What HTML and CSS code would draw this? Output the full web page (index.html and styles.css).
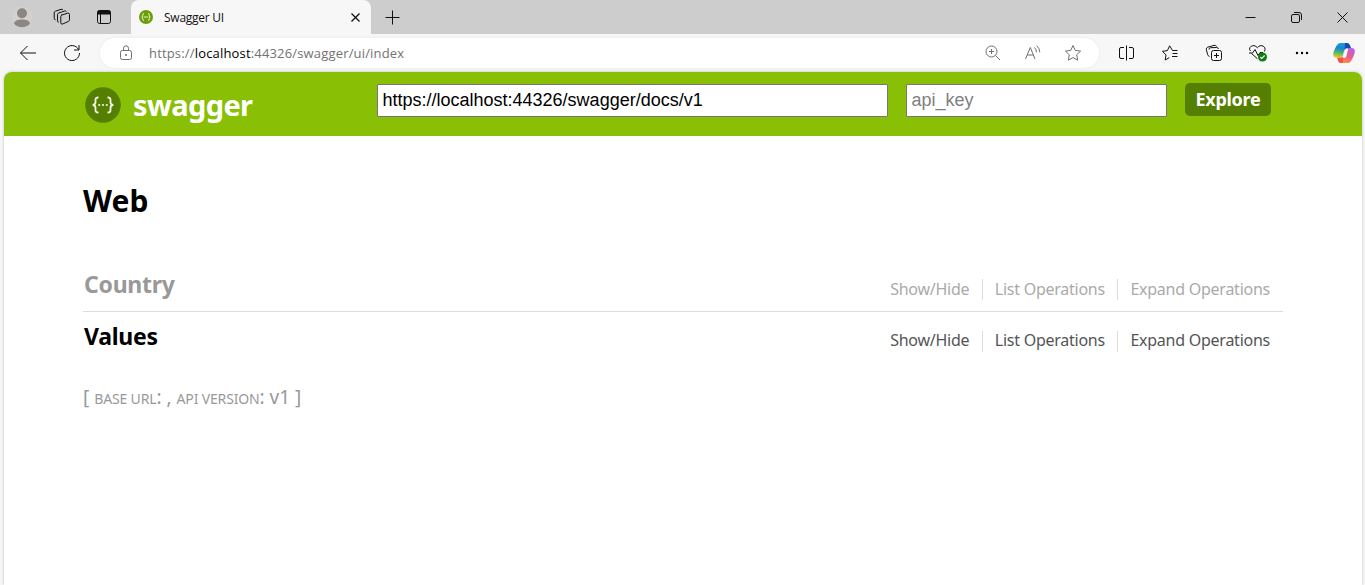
FILE: index.html
```html
<!DOCTYPE html>
<html lang="en">
<head>
<meta charset="utf-8">
<title>Swagger UI</title>
<link rel="stylesheet" href="styles.css">
</head>
<body>
<div class="tabstrip">
  <div class="cell"><svg width="22" height="22" viewBox="0 0 22 22"><circle cx="11" cy="11" r="10.5" fill="#d3d0cd"/><circle cx="11" cy="7.3" r="5" fill="#8b8682"/><path d="M3 17.5C4 14.5 7 13.6 11 13.6s7 .9 8 3.9c-2 2.600-5 3.800-8 3.800s-6-1.200-8-3.800Z" fill="#8b8682"/></svg></div>
  <div class="cell"><svg class="line" width="18" height="18" viewBox="0 0 18 18"><path d="M8 7.300 14.500 5.200q2-.5 2 1.300v5.200q0 1.300-1.300 1.800L9.700 16q-1.900.6-1.900-1.200V8.600q0-1 .8-1.400"/><path d="M5.800 14.200q-1.300 0-1.300-1.400V6.700q0-1.300 1.200-1.700L11.700 3q1.200-.4 1.800.6M2.600 11.800Q1.200 11.700 1.200 10.300V4.900q0-1.300 1.200-1.700L8 1.300q1.300-.4 1.900.6"/></svg></div>
  <div class="cell cell-narrow"><svg class="line" width="16" height="16" viewBox="0 0 16 16"><rect x="1.500" y="1.500" width="13" height="13" rx="2.200"/><path d="M2 2h12v3H2Z" fill="#111"/><path d="M4.500 5v9.500"/></svg></div>
  <div class="tab">
    <svg width="14" height="14" viewBox="0 0 14 14"><circle cx="7" cy="7" r="7" fill="#6b9e08"/><path d="M5 3.500q-1.300 0-1.300 1.300v1.100q0 1-1 1.100 1 .1 1 1.100v1.100q0 1.300 1.300 1.300M9 3.500q1.300 0 1.300 1.300v1.100q0 1 1 1.100-1 .1-1 1.100v1.100q0 1.300-1.300 1.300M4.800 7h4.400" fill="none" stroke="#e8f3cd"/></svg>
    <span class="tab-title">Swagger UI</span>
    <svg class="line strong" width="9" height="9" viewBox="0 0 9 9"><path d="m.5.5 8 8m0-8-8 8"/></svg>
  </div>
  <div class="new-tab"><svg class="line" width="15" height="15" viewBox="0 0 15 15"><path d="M7.500.5v14M.5 7.500h14"/></svg></div>
  <div class="window-controls">
    <div><svg class="line" width="11" height="11"><path d="M.5 5.500h10"/></svg></div>
    <div><svg class="line" width="11" height="11" viewBox="0 0 11 11"><rect x=".5" y="2.500" width="8" height="8" rx="1.500"/><path d="M3 .5h5q2.500 0 2.500 2.500v5"/></svg></div>
    <div><svg class="line" width="11" height="11"><path d="m.5.5 10 10m0-10-10 10"/></svg></div>
  </div>
</div>
<div class="toolbar">
  <div class="tool"><svg class="line" width="18" height="16" viewBox="0 0 18 16"><path d="M8.500 1 1.500 8l7 7M1.500 8H17"/></svg></div>
  <div class="tool"><svg class="line" width="18" height="18" viewBox="0 0 18 18"><path d="M15.600 5.500A7.500 7.500 0 1 0 16.500 9M16 1v5h-5"/></svg></div>
  <div class="address">
    <svg class="line grey" width="14" height="18" viewBox="0 0 14 18"><rect x="1.500" y="6.500" width="11" height="9" rx="1.800"/><path d="M4.500 6.500V4.300a2.500 2.500 0 0 1 5 0v2.200"/><circle cx="7" cy="11" r=".6" fill="#666"/></svg>
    <span class="url">https://<b>localhost</b>:44326/swagger/ui/index</span>
    <div class="address-icons">
      <div><svg class="line grey" width="16" height="16" viewBox="0 0 16 16"><circle cx="6.500" cy="6.500" r="5.500"/><path d="m10.500 10.500 4.500 4.500M6.500 4v5M4 6.500h5"/></svg></div>
      <div><svg class="line grey" width="18" height="16" viewBox="0 0 18 16"><path d="M1.500 14 6.300 2.500 11 14M3.200 10h6.200M10.500 2.500q2 2 2 4.800M12.800.8q3 2.600 3 6.500"/></svg></div>
      <div><svg class="line grey" width="18" height="18" viewBox="0 0 18 18"><path d="m9 1.500 2.300 4.900 5.300.7-3.900 3.700 1 5.400L9 13.600l-4.700 2.600 1-5.400L1.400 7.100l5.300-.7Z"/></svg></div>
    </div>
  </div>
  <div class="tool"><svg class="line" width="17" height="16" viewBox="0 0 17 16"><path d="M6 2.500H3q-1.500 0-1.500 1.500v8q0 1.500 1.500 1.500h3M11 2.500h3q1.500 0 1.500 1.500v8q0 1.500-1.500 1.500h-3M8.500.5v15"/></svg></div>
  <div class="tool"><svg class="line" width="18" height="18" viewBox="0 0 18 18"><path d="M16.500 6.500h-5L8.600 1.800 6.400 6.600l-5 .7L5 10.900 4.200 16 8.300 13.600M11.500 9.500h5M11 12.500h5.500"/></svg></div>
  <div class="tool"><svg class="line" width="18" height="18" viewBox="0 0 18 18"><rect x="6.500" y="6.500" width="10" height="10" rx="2"/><path d="M11.500 9v5M9 11.500h5M4.500 12.500Q3 12 2.700 10.700L1.300 5.500Q1 3.700 2.700 3.200L9 1.400q2-.5 2.600 1.200M4 5.500q0-1.700 1.600-1.800l6-.2q1.700 0 1.800 1.500"/></svg></div>
  <div class="tool"><svg class="line" width="20" height="18" viewBox="0 0 20 18"><path d="M9.500 14.800 3.500 9.500M2.500 7Q.9 5.500 1.900 3.600 3.200 1.300 5.900 1.600 8 2 9.400 3.700q1.300-1.900 3.400-2.100 2.900-.2 4 2.200.8 1.800-.4 3.700M1 9h3.500L7 5.500l3 6 2-3h3"/><circle cx="14.500" cy="13" r="4.500" fill="#107c10" stroke="none"/><path d="m12.400 13.200 1.400 1.300 2.800-3" stroke="#fff" stroke-width="1.200"/></svg></div>
  <div class="tool"><svg width="14" height="4" viewBox="0 0 14 4"><circle cx="2" cy="2" r="1.200"/><circle cx="7" cy="2" r="1.200"/><circle cx="12" cy="2" r="1.200"/></svg></div>
  <div class="tool tool-last"><svg width="22" height="22" viewBox="0 0 22 22">
    <defs>
      <linearGradient id="cool" x1=".4" y1="0" x2=".2" y2="1"><stop offset="0" stop-color="#139fdc"/><stop offset=".35" stop-color="#1688d2"/><stop offset=".65" stop-color="#54b76a"/><stop offset="1" stop-color="#f2cf13"/></linearGradient>
      <linearGradient id="warm" x1=".8" y1="0" x2=".3" y2="1"><stop offset="0" stop-color="#ad65ee"/><stop offset=".5" stop-color="#ed5a91"/><stop offset="1" stop-color="#ff963b"/></linearGradient>
    </defs>
    <path d="M7 1h7q2.200 0 3 2.500L17.800 6H14q-2 0-2.700 2.400L9.600 14q-.6 1.700-2.500 1.700H3.500Q0 15.700.2 12 .4 9 3.700 3.500 5 1 7 1Z" fill="url(#cool)"/>
    <path d="M12 1h2q2.200 0 3 2.500L17.800 6H14q-1.500 0-2.300 1.500Z" fill="#1749b5"/>
    <path d="M15 21H8q-2.200 0-3-2.500L4.300 15.700H8q1.900 0 2.500-2.200L12.300 8Q13 6 15 6h3.500q3.500 0 3.300 3.700-.2 3.100-3.500 8.800Q17 21 15 21Z" fill="url(#warm)"/>
    <path d="M10 21H8q-2.200 0-3-2.500L4.300 15.700H8q1.500 0 2.200-1.200Z" fill="#ef563d"/>
    <path d="M12.300 7.800 9.800 15.700h1.700q1.300 0 1.700-1.300l2-7.500q-2-.5-2.900.9Z" fill="#fff"/>
  </svg></div>
</div>
<main class="page">
  <header class="header">
    <div class="brand">
      <svg width="36" height="36" viewBox="0 0 36 36"><circle cx="18" cy="18" r="17.800" fill="#547f00"/><path d="M13.500 10.500q-3-.2-3 2.200v2.600q0 2.400-2.800 2.700 2.800.3 2.800 2.700v2.600q0 2.400 3 2.200M22.500 10.500q3-.2 3 2.200v2.600q0 2.400 2.800 2.700-2.800.3-2.800 2.700v2.600q0 2.400-3 2.200" fill="none" stroke="#f1f5e8" stroke-width="1.800"/><g fill="#f1f5e8"><circle cx="14.200" cy="18" r="1.100"/><circle cx="18" cy="18" r="1.100"/><circle cx="21.800" cy="18" r="1.100"/></g></svg>
      <span class="brand-name">swagger</span>
    </div>
    <input class="field field-url" type="text" value="https://localhost:44326/swagger/docs/v1" spellcheck="false">
    <input class="field field-key" type="text" placeholder="api_key">
    <a class="explore">Explore</a>
  </header>
  <div class="content">
    <h1 class="title">Web</h1>
    <section class="resource">
      <h2 class="name">Country</h2>
      <ul class="options"><li>Show/Hide</li><li>List Operations</li><li>Expand Operations</li></ul>
    </section>
    <section class="resource active">
      <h2 class="name">Values</h2>
      <ul class="options"><li>Show/Hide</li><li>List Operations</li><li>Expand Operations</li></ul>
    </section>
    <p class="footer">[ <span class="caps">base url</span>: , <span class="caps">api version</span>: v1 ]</p>
  </div>
</main>
</body>
</html>
```
FILE: styles.css
```css
* { box-sizing: border-box; }
body { margin: 0; height: 585px; overflow: hidden; background: #f7f7f7; font-family: "Open Sans", "Noto Sans", sans-serif; }
svg { display: block; flex: none; }
.line { fill: none; stroke: #111; stroke-width: 1; }
.strong { stroke-width: 1.3; }
.grey { stroke: #707070; }
.tabstrip { display: flex; height: 34px; background: #cdcdcd; padding-left: 2px; }
.cell { display: grid; place-items: center; width: 40px; }
.cell-narrow { width: 44px; }
.tab { display: flex; align-items: center; width: 240px; margin-left: 5px; padding: 0 11px 0 8px; background: #f7f7f7; border-radius: 8px 8px 0 0; }
.tab-title { flex: 1; margin-left: 11px; font-size: 12px; letter-spacing: -.25px; color: #111; }
.new-tab { display: grid; place-items: center; width: 43px; }
.window-controls { display: flex; margin-left: auto; }
.window-controls div { display: grid; place-items: center; width: 46px; }
.toolbar { display: flex; align-items: center; height: 38px; padding-left: 6px; }
.tool { display: grid; place-items: center; width: 44px; height: 38px; }
.tool-last { width: 40px; }
.address { display: flex; align-items: center; width: 999px; height: 30px; margin: 0 5px 0 6px; padding: 0 6px 0 19px; background: #fff; border-radius: 15px; box-shadow: 0 0 3px #e6e6e6; }
.url { margin-left: 16px; font-size: 13px; letter-spacing: .17px; color: #737373; white-space: nowrap; }
.url b { font-weight: 400; color: #000; }
.address-icons { display: flex; margin-left: auto; }
.address-icons div { display: grid; place-items: center; width: 40px; }
.page { width: 1358px; height: 513px; margin-left: 4px; background: #fff; border-radius: 8px 8px 0 0; box-shadow: 0 0 3px #bbb; }
.header { display: flex; align-items: flex-start; height: 64px; padding: 11px 0 0 81px; background: #89bf04; border-radius: 8px 8px 0 0; }
.brand { display: flex; align-items: center; width: 292px; height: 36px; margin-top: 4px; }
.brand-name { margin: -2px 0 0 12px; font: 700 29px "Noto Sans", sans-serif; letter-spacing: -.6px; color: #fff; }
.field { height: 33px; margin: 1px 18px 0 0; padding: 0 4px 1px 4.5px; border: 1px solid #767676; border-radius: 1px; background: #fff; font: 18px "Liberation Sans", Arial, sans-serif; color: #000; outline: 0; }
.field::placeholder { color: #808080; }
.field-url { width: 511px; }
.field-key { width: 261px; }
.explore { width: 86px; height: 33px; border-radius: 5px; background: #547f00; color: #fff; font: 700 18px/33px "Noto Sans", sans-serif; letter-spacing: -.3px; text-align: center; }
.content { width: 1200px; margin-left: 79px; padding-top: 42px; font-family: "Noto Sans", "Open Sans", sans-serif; }
.title { margin: 0; font-size: 30px; line-height: 46px; font-weight: 700; letter-spacing: .1px; }
.resource { display: flex; justify-content: space-between; height: 52px; padding: 0 13px 0 1px; border-bottom: 1px solid #ddd; color: #aaa; }
.title + .resource { margin-top: 36px; }
.name { margin: 7px 0 0; font-size: 23px; line-height: 34px; letter-spacing: -.25px; color: #999; }
.options { display: flex; margin: 19px 0 0; padding: 0; height: 21px; list-style: none; font-size: 16px; line-height: 21px; letter-spacing: -.25px; white-space: nowrap; }
.options li { padding: 0 12.5px 0 12px; border-right: 1px solid #ddd; }
.options li:last-child { padding-right: 0; border: 0; }
.active { border: 0; color: #555; }
.active .options { line-height: 19px; }
.active .name { color: #000; }
.footer { margin: 20px 0 0; font-size: 19px; line-height: 26px; color: #999; }
.caps { font-size: 14px; text-transform: uppercase; letter-spacing: -.15px; }
```
